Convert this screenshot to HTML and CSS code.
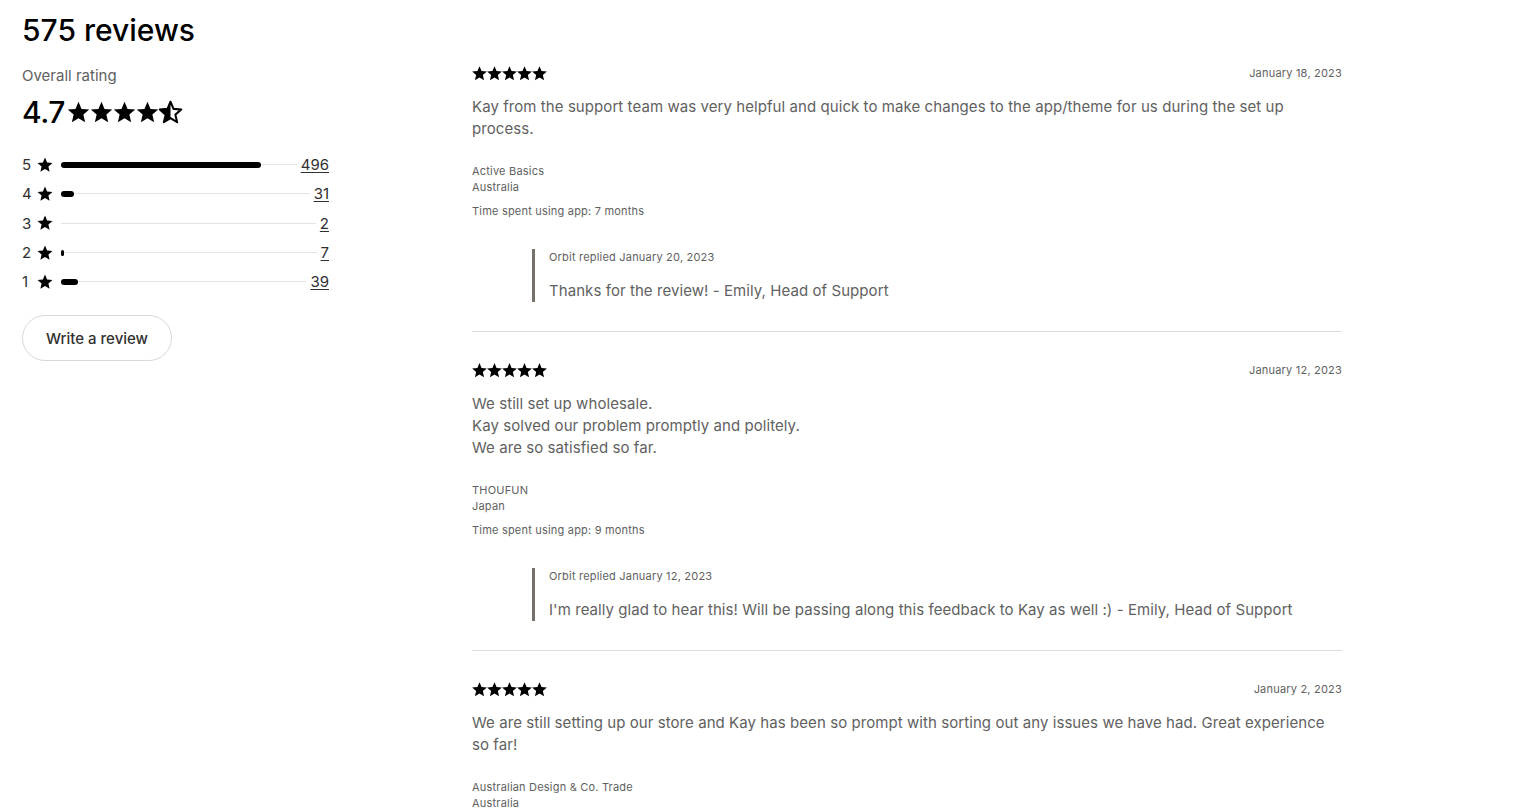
FILE: index.html
```html
<!DOCTYPE html>
<html lang="en">
<head>
<meta charset="utf-8">
<title>575 reviews</title>
<link rel="stylesheet" href="styles.css">
</head>
<body>
<svg width="0" height="0" class="defs" aria-hidden="true">
  <defs>
    <symbol id="star" viewBox="0 0 24 24"><path d="M12 17.27L18.18 21l-1.64-7.03L22 9.24l-7.19-.61L12 2 9.19 8.63 2 9.24l5.46 4.73L5.82 21z"/></symbol>
    <clipPath id="halfclip"><rect x="0" y="0" width="12" height="24"/></clipPath>
  </defs>
</svg>
<main class="page">
  <h2 class="title">575 reviews</h2>
  <div class="layout">
    <aside class="summary">
      <div class="overall-label">Overall rating</div>
      <div class="overall">
        <span class="overall-num">4.7</span>
        <span class="big-stars">
          <svg class="bstar"><use href="#star"/></svg>
          <svg class="bstar"><use href="#star"/></svg>
          <svg class="bstar"><use href="#star"/></svg>
          <svg class="bstar"><use href="#star"/></svg>
          <svg class="bstar" viewBox="0 0 24 24"><path d="M12 17.27L18.18 21l-1.64-7.03L22 9.24l-7.19-.61L12 2 9.19 8.63 2 9.24l5.46 4.73L5.82 21z" fill="none" stroke="#000" stroke-width="1.9" stroke-linejoin="round"/><path clip-path="url(#halfclip)" d="M12 17.27L18.18 21l-1.64-7.03L22 9.24l-7.19-.61L12 2 9.19 8.63 2 9.24l5.46 4.73L5.82 21z"/></svg>
        </span>
      </div>
      <ul class="bars">
        <li class="bar-row"><span class="bar-n">5</span><svg class="sstar"><use href="#star"/></svg><span class="track"><span class="fill" style="width:85%"></span></span><a class="count" href="#">496</a></li>
        <li class="bar-row"><span class="bar-n">4</span><svg class="sstar"><use href="#star"/></svg><span class="track"><span class="fill" style="width:5.4%"></span></span><a class="count" href="#">31</a></li>
        <li class="bar-row"><span class="bar-n">3</span><svg class="sstar"><use href="#star"/></svg><span class="track"><span class="fill" style="width:0%"></span></span><a class="count" href="#">2</a></li>
        <li class="bar-row"><span class="bar-n">2</span><svg class="sstar"><use href="#star"/></svg><span class="track"><span class="fill" style="width:1%"></span></span><a class="count" href="#">7</a></li>
        <li class="bar-row"><span class="bar-n">1</span><svg class="sstar"><use href="#star"/></svg><span class="track"><span class="fill" style="width:6.8%"></span></span><a class="count" href="#">39</a></li>
      </ul>
      <button class="write-btn" type="button">Write a review</button>
    </aside>

    <section class="reviews">
      <article class="review">
        <div class="review-head">
          <span class="rstars"><svg class="rstar"><use href="#star"/></svg><svg class="rstar"><use href="#star"/></svg><svg class="rstar"><use href="#star"/></svg><svg class="rstar"><use href="#star"/></svg><svg class="rstar"><use href="#star"/></svg></span>
          <span class="date">January 18, 2023</span>
        </div>
        <p class="body">Kay from the support team was very helpful and quick to make changes to the app/theme for us during the set up process.</p>
        <div class="meta"><div>Active Basics</div><div>Australia</div></div>
        <div class="time">Time spent using app: 7 months</div>
        <div class="reply">
          <div class="reply-meta">Orbit replied January 20, 2023</div>
          <p class="reply-body">Thanks for the review! - Emily, Head of Support</p>
        </div>
      </article>

      <article class="review">
        <div class="review-head">
          <span class="rstars"><svg class="rstar"><use href="#star"/></svg><svg class="rstar"><use href="#star"/></svg><svg class="rstar"><use href="#star"/></svg><svg class="rstar"><use href="#star"/></svg><svg class="rstar"><use href="#star"/></svg></span>
          <span class="date">January 12, 2023</span>
        </div>
        <p class="body">We still set up wholesale.<br>Kay solved our problem promptly and politely.<br>We are so satisfied so far.</p>
        <div class="meta"><div>THOUFUN</div><div>Japan</div></div>
        <div class="time">Time spent using app: 9 months</div>
        <div class="reply">
          <div class="reply-meta">Orbit replied January 12, 2023</div>
          <p class="reply-body">I'm really glad to hear this! Will be passing along this feedback to Kay as well :) - Emily, Head of Support</p>
        </div>
      </article>

      <article class="review">
        <div class="review-head">
          <span class="rstars"><svg class="rstar"><use href="#star"/></svg><svg class="rstar"><use href="#star"/></svg><svg class="rstar"><use href="#star"/></svg><svg class="rstar"><use href="#star"/></svg><svg class="rstar"><use href="#star"/></svg></span>
          <span class="date">January 2, 2023</span>
        </div>
        <p class="body">We are still setting up our store and Kay has been so prompt with sorting out any issues we have had. Great experience so far!</p>
        <div class="meta"><div>Australian Design &amp; Co. Trade</div><div>Australia</div></div>
      </article>
    </section>
  </div>
</main>
</body>
</html>
```

FILE: styles.css
```css
* { box-sizing: border-box; }
html, body { margin: 0; padding: 0; background: #fff; }
body {
  font-family: Inter, "Noto Sans", "Liberation Sans", sans-serif;
  color: #616161;
  overflow: hidden;
}
.defs { position: absolute; width: 0; height: 0; }
.page { padding: 10px 22px 0; }
.title {
  margin: 0;
  font-size: 30px;
  line-height: 40px;
  font-weight: 500;
  color: #000;
}
.layout {
  display: grid;
  grid-template-columns: 307px 870px;
  column-gap: 143px;
  margin-top: 15px;
  align-items: start;
}
.summary { display: flex; flex-direction: column; align-items: flex-start; }
.overall-label { font-size: 15px; line-height: 20px; color: #616161; margin-top: 1px; }
.overall { display: flex; align-items: center; height: 36px; margin-top: 8px; }
.overall-num { font-size: 30px; line-height: 36px; font-weight: 500; color: #000; letter-spacing: -0.5px; }
.big-stars { display: flex; margin-left: 2px; }
.bstar { width: 23px; height: 23px; fill: #000; display: block; transform: scale(1.12); }
.bars { list-style: none; margin: 20px 0 0; padding: 0; width: 307px; }
.bar-row { display: flex; align-items: center; height: 29.3px; }
.bar-n { width: 14px; font-size: 15px; color: #303030; }
.sstar { width: 18px; height: 18px; fill: #000; display: block; }
.track {
  flex: 1;
  height: 1px;
  background: #e3e3e3;
  margin-left: 7px;
  margin-right: 4px;
  display: flex;
  align-items: center;
}
.fill { display: block; height: 6px; background: #000; border-radius: 3px; }
.count { font-size: 15px; color: #303030; text-decoration: underline; text-underline-offset: 2px; }
.write-btn {
  margin-top: 19px;
  height: 46px;
  padding: 0 23px;
  border: 1px solid #d8d8d8;
  border-radius: 23px;
  background: #fff;
  font-family: inherit;
  font-size: 15px;
  font-weight: 500;
  color: #303030;
}
.reviews { display: flex; flex-direction: column; }
.review { padding: 30px 0 29px; border-bottom: 1px solid #dcdcdc; }
.review:first-child { padding-top: 0; }
.review:last-child { border-bottom: 0; }
.review-head { display: flex; justify-content: space-between; align-items: center; height: 16px; }
.rstars { display: flex; }
.rstar { width: 15px; height: 15px; fill: #000; display: block; transform: scale(1.18); }
.date { font-size: 11px; line-height: 16px; color: #616161; letter-spacing: 0.2px; }
.body { margin: 15px 0 0; font-size: 15px; line-height: 22px; color: #616161; letter-spacing: 0.07px; }
.meta { margin-top: 23px; font-size: 11px; line-height: 16px; color: #616161; letter-spacing: 0.2px; }
.time { margin-top: 8px; font-size: 11px; line-height: 16px; color: #616161; letter-spacing: 0.2px; }
.reply { margin: 30px 0 0 60px; border-left: 3px solid #77716b; padding-left: 14px; }
.reply-meta { font-size: 11px; line-height: 16px; color: #616161; letter-spacing: 0.2px; }
.reply-body { margin: 15px 0 0; font-size: 15px; line-height: 22px; color: #616161; letter-spacing: 0.07px; }
```
